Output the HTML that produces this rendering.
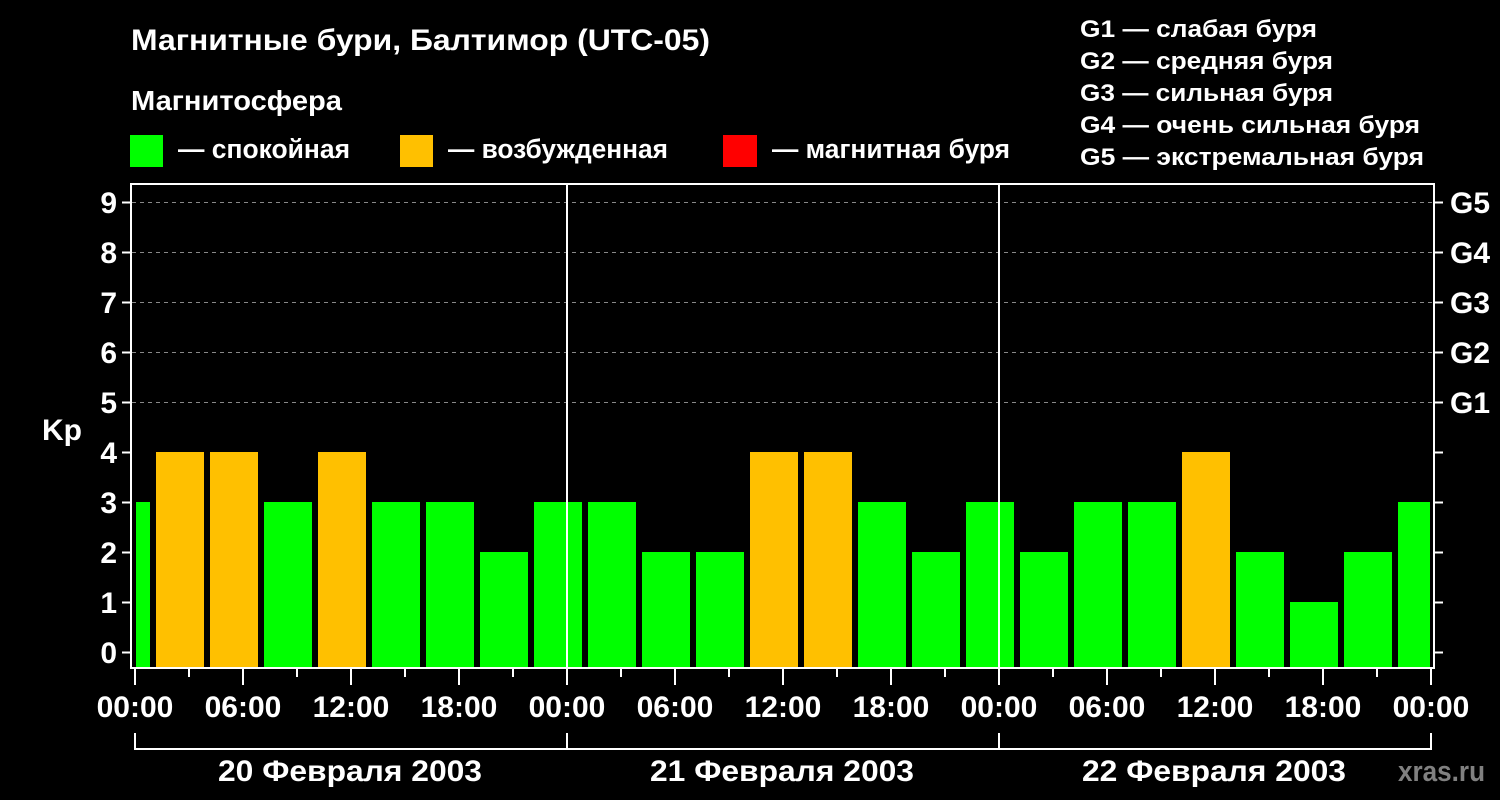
<!DOCTYPE html>
<html><head><meta charset="utf-8"><style>
html,body{margin:0;padding:0;background:#000;width:1500px;height:800px;overflow:hidden}
svg{display:block}
text{font-family:"Liberation Sans",sans-serif;font-weight:bold;fill:#fff}
</style></head><body>
<svg width="1500" height="800" viewBox="0 0 1500 800" xmlns="http://www.w3.org/2000/svg">
<rect width="1500" height="800" fill="#000"/>
<text x="131" y="50" font-size="30" textLength="579" lengthAdjust="spacingAndGlyphs">Магнитные бури, Балтимор (UTC-05)</text>
<text x="131" y="110" font-size="28" textLength="211" lengthAdjust="spacingAndGlyphs">Магнитосфера</text>
<rect x="130" y="135" width="33" height="32" fill="#00ff00"/>
<text x="178" y="158" font-size="27" textLength="172" lengthAdjust="spacingAndGlyphs">— спокойная</text>
<rect x="400" y="135" width="33" height="32" fill="#ffc000"/>
<text x="448" y="158" font-size="27" textLength="220" lengthAdjust="spacingAndGlyphs">— возбужденная</text>
<rect x="723" y="135" width="34" height="32" fill="#ff0000"/>
<text x="772" y="158" font-size="27" textLength="238" lengthAdjust="spacingAndGlyphs">— магнитная буря</text>
<g font-size="24.5">
<text x="1080" y="37" textLength="237" lengthAdjust="spacingAndGlyphs">G1 — слабая буря</text>
<text x="1080" y="69" textLength="253" lengthAdjust="spacingAndGlyphs">G2 — средняя буря</text>
<text x="1080" y="101" textLength="253" lengthAdjust="spacingAndGlyphs">G3 — сильная буря</text>
<text x="1080" y="133" textLength="340" lengthAdjust="spacingAndGlyphs">G4 — очень сильная буря</text>
<text x="1080" y="165" textLength="344" lengthAdjust="spacingAndGlyphs">G5 — экстремальная буря</text>
</g>
<g stroke="#888" stroke-width="1" stroke-dasharray="4,4">
<line x1="132" y1="202.5" x2="1434" y2="202.5"/>
<line x1="132" y1="252.5" x2="1434" y2="252.5"/>
<line x1="132" y1="302.5" x2="1434" y2="302.5"/>
<line x1="132" y1="352.5" x2="1434" y2="352.5"/>
<line x1="132" y1="402.5" x2="1434" y2="402.5"/>
</g>
<g fill="#00ff00">
<rect x="136" y="502" width="14" height="166"/>
<rect x="264" y="502" width="48" height="166"/>
<rect x="372" y="502" width="48" height="166"/>
<rect x="426" y="502" width="48" height="166"/>
<rect x="480" y="552" width="48" height="116"/>
<rect x="534" y="502" width="48" height="166"/>
<rect x="588" y="502" width="48" height="166"/>
<rect x="642" y="552" width="48" height="116"/>
<rect x="696" y="552" width="48" height="116"/>
<rect x="858" y="502" width="48" height="166"/>
<rect x="912" y="552" width="48" height="116"/>
<rect x="966" y="502" width="48" height="166"/>
<rect x="1020" y="552" width="48" height="116"/>
<rect x="1074" y="502" width="48" height="166"/>
<rect x="1128" y="502" width="48" height="166"/>
<rect x="1236" y="552" width="48" height="116"/>
<rect x="1290" y="602" width="48" height="66"/>
<rect x="1344" y="552" width="48" height="116"/>
<rect x="1398" y="502" width="32" height="166"/>
</g>
<g fill="#ffc000">
<rect x="156" y="452" width="48" height="216"/>
<rect x="210" y="452" width="48" height="216"/>
<rect x="318" y="452" width="48" height="216"/>
<rect x="750" y="452" width="48" height="216"/>
<rect x="804" y="452" width="48" height="216"/>
<rect x="1182" y="452" width="48" height="216"/>
</g>
<g stroke="#fff" stroke-width="2" fill="none">
<rect x="131" y="184" width="1303" height="484"/>
<line x1="567" y1="184" x2="567" y2="668"/>
<line x1="999" y1="184" x2="999" y2="668"/>
</g>
<g stroke="#fff" stroke-width="2">
<line x1="122" y1="202.5" x2="131" y2="202.5"/><line x1="1434" y1="202.5" x2="1443" y2="202.5"/>
<line x1="122" y1="252.5" x2="131" y2="252.5"/><line x1="1434" y1="252.5" x2="1443" y2="252.5"/>
<line x1="122" y1="302.5" x2="131" y2="302.5"/><line x1="1434" y1="302.5" x2="1443" y2="302.5"/>
<line x1="122" y1="352.5" x2="131" y2="352.5"/><line x1="1434" y1="352.5" x2="1443" y2="352.5"/>
<line x1="122" y1="402.5" x2="131" y2="402.5"/><line x1="1434" y1="402.5" x2="1443" y2="402.5"/>
<line x1="122" y1="452.5" x2="131" y2="452.5"/><line x1="1434" y1="452.5" x2="1443" y2="452.5"/>
<line x1="122" y1="502.5" x2="131" y2="502.5"/><line x1="1434" y1="502.5" x2="1443" y2="502.5"/>
<line x1="122" y1="552.5" x2="131" y2="552.5"/><line x1="1434" y1="552.5" x2="1443" y2="552.5"/>
<line x1="122" y1="602.5" x2="131" y2="602.5"/><line x1="1434" y1="602.5" x2="1443" y2="602.5"/>
<line x1="122" y1="652.5" x2="131" y2="652.5"/><line x1="1434" y1="652.5" x2="1443" y2="652.5"/>
</g>
<g stroke="#fff" stroke-width="2">
<line x1="135" y1="669" x2="135" y2="685"/><line x1="189" y1="669" x2="189" y2="677"/>
<line x1="243" y1="669" x2="243" y2="685"/><line x1="297" y1="669" x2="297" y2="677"/>
<line x1="351" y1="669" x2="351" y2="685"/><line x1="405" y1="669" x2="405" y2="677"/>
<line x1="459" y1="669" x2="459" y2="685"/><line x1="513" y1="669" x2="513" y2="677"/>
<line x1="567" y1="669" x2="567" y2="685"/><line x1="621" y1="669" x2="621" y2="677"/>
<line x1="675" y1="669" x2="675" y2="685"/><line x1="729" y1="669" x2="729" y2="677"/>
<line x1="783" y1="669" x2="783" y2="685"/><line x1="837" y1="669" x2="837" y2="677"/>
<line x1="891" y1="669" x2="891" y2="685"/><line x1="945" y1="669" x2="945" y2="677"/>
<line x1="999" y1="669" x2="999" y2="685"/><line x1="1053" y1="669" x2="1053" y2="677"/>
<line x1="1107" y1="669" x2="1107" y2="685"/><line x1="1161" y1="669" x2="1161" y2="677"/>
<line x1="1215" y1="669" x2="1215" y2="685"/><line x1="1269" y1="669" x2="1269" y2="677"/>
<line x1="1323" y1="669" x2="1323" y2="685"/><line x1="1377" y1="669" x2="1377" y2="677"/>
<line x1="1431" y1="669" x2="1431" y2="685"/>
<line x1="135" y1="733" x2="135" y2="750"/>
<line x1="567" y1="733" x2="567" y2="750"/>
<line x1="999" y1="733" x2="999" y2="750"/>
<line x1="1431" y1="733" x2="1431" y2="750"/>
<line x1="134" y1="749" x2="1432" y2="749"/>
</g>
<g font-size="30" text-anchor="end">
<text x="117" y="213">9</text><text x="117" y="263">8</text><text x="117" y="313">7</text>
<text x="117" y="363">6</text><text x="117" y="413">5</text><text x="117" y="463">4</text>
<text x="117" y="513">3</text><text x="117" y="563">2</text><text x="117" y="613">1</text>
<text x="117" y="663">0</text>
</g>
<text x="42" y="440" font-size="30">Kp</text>
<g font-size="30">
<text x="1450" y="213">G5</text><text x="1450" y="263">G4</text><text x="1450" y="313">G3</text>
<text x="1450" y="363">G2</text><text x="1450" y="413">G1</text>
</g>
<g font-size="30" text-anchor="middle">
<text x="135" y="717">00:00</text><text x="243" y="717">06:00</text><text x="351" y="717">12:00</text><text x="459" y="717">18:00</text>
<text x="567" y="717">00:00</text><text x="675" y="717">06:00</text><text x="783" y="717">12:00</text><text x="891" y="717">18:00</text>
<text x="999" y="717">00:00</text><text x="1107" y="717">06:00</text><text x="1215" y="717">12:00</text><text x="1323" y="717">18:00</text>
<text x="1431" y="717">00:00</text>
</g>
<g font-size="30" text-anchor="middle">
<text x="350" y="781" textLength="264" lengthAdjust="spacingAndGlyphs">20 Февраля 2003</text>
<text x="782" y="781" textLength="264" lengthAdjust="spacingAndGlyphs">21 Февраля 2003</text>
<text x="1214" y="781" textLength="264" lengthAdjust="spacingAndGlyphs">22 Февраля 2003</text>
</g>
<text x="1398" y="781" font-size="29" style="fill:#808080" textLength="87" lengthAdjust="spacingAndGlyphs">xras.ru</text>
</svg>
</body></html>
